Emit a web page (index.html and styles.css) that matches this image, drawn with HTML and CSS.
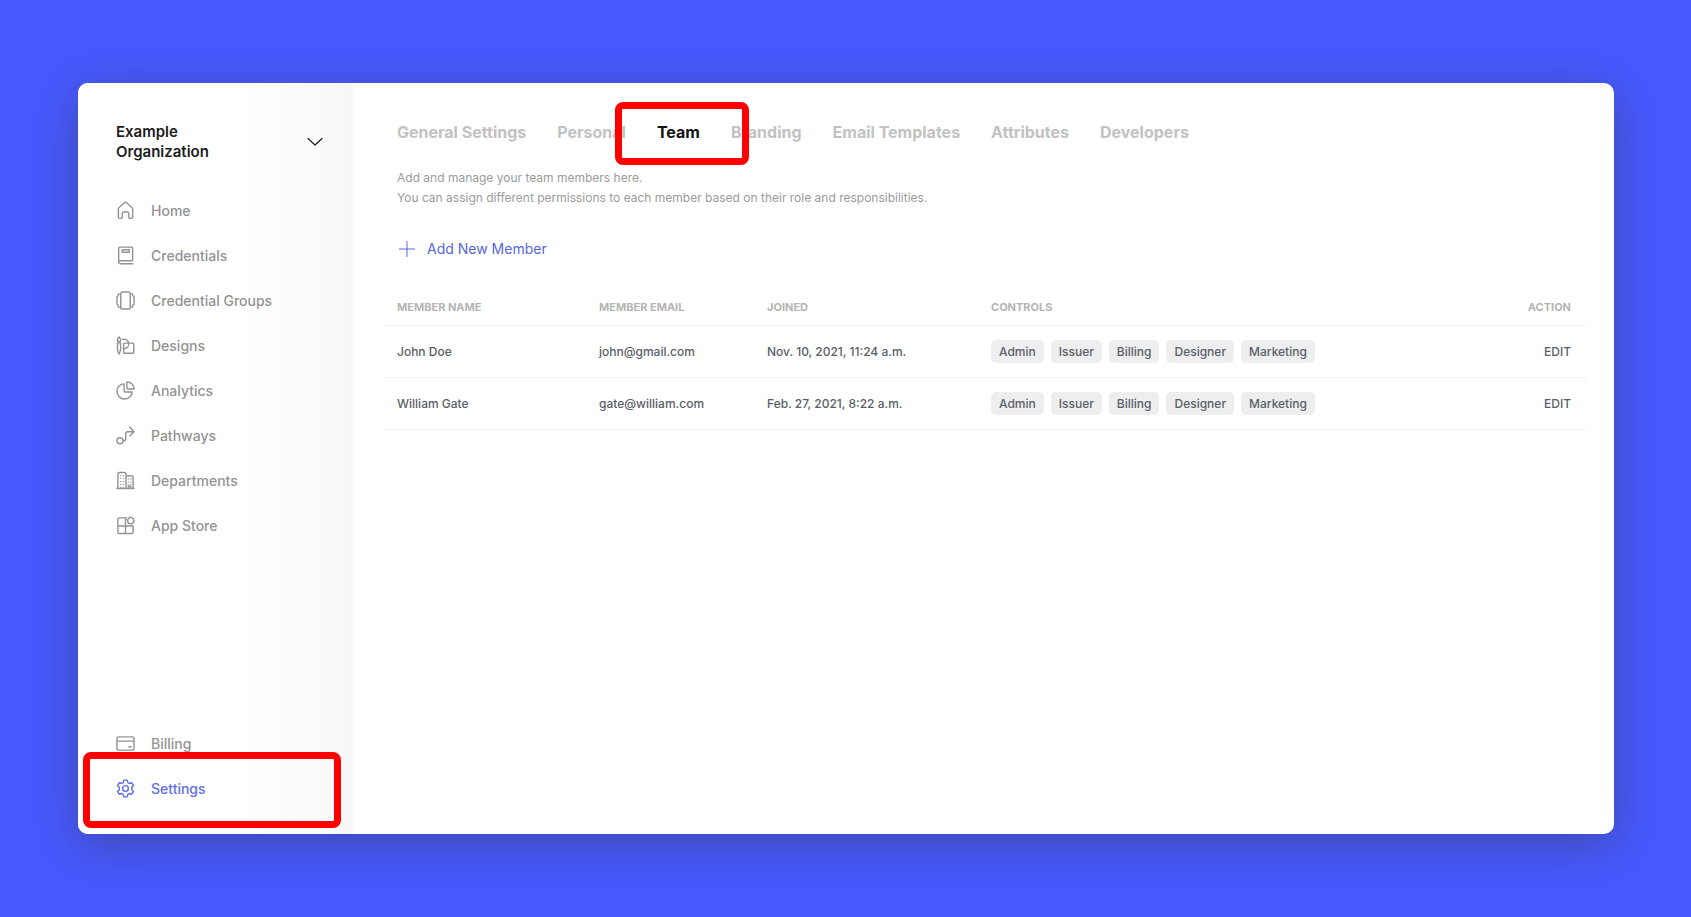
FILE: index.html
```html
<!DOCTYPE html>
<html lang="en">
<head>
	<meta charset="UTF-8">
	<title>Team</title>
	<link rel="stylesheet" href="styles.css">
</head>
<body>

	<div class="window">
		<aside class="sidebar">
			<button class="org" type="button">
				<span>Example<br>Organization</span>
				<svg class="chevron" viewBox="0 0 16 10"><path d="M1 1.5l7 6.5 7-6.5"/></svg>
			</button>
			<nav class="menu">
				<a href="#">
					<svg viewBox="0 0 20 20"><path d="M2.500 17V8.200c0-.6.2-1 .7-1.400L9 1.800c.6-.5 1.400-.5 2 0l5.800 5c.5.4.7.8.7 1.400V17c0 .8-.5 1.300-1.300 1.300h-1.400c-.8 0-1.300-.5-1.300-1.300v-4c0-.9-.6-1.500-1.500-1.500H8c-.9 0-1.500.6-1.500 1.500v4c0 .8-.5 1.300-1.300 1.300H3.800c-.8 0-1.300-.5-1.300-1.300z"/></svg>
					Home
				</a>
				<a href="#">
					<svg viewBox="0 0 20 20"><path d="M17.500 15.500V2.500c0-.8-.5-1.300-1.300-1.300H4.500c-1 0-1.700.7-1.700 1.700v14c0 1 .7 1.700 1.700 1.700h13M17.500 15.500h-13c-1 0-1.700.6-1.700 1.500M6.500 4h7.500v2.500H6.500z"/></svg>
					Credentials
				</a>
				<a href="#">
					<svg viewBox="0 0 20 20"><rect x="5" y="1" width="10" height="18" rx="2"/><path d="M5 3H3.500C2.700 3 2.300 3.500 2.300 4.200v.8C1.300 5.200 1 5.800 1 6.500v7c0 .8.4 1.400 1.300 1.500v.8c0 .8.5 1.200 1.200 1.200H5M15 3h1.500c.8 0 1.200.5 1.200 1.200v.8c1 .2 1.300.8 1.300 1.500v7c0 .8-.4 1.400-1.300 1.500v.8c0 .8-.5 1.200-1.200 1.200H15"/></svg>
					Credential Groups
				</a>
				<a href="#">
					<svg viewBox="0 0 20 20"><path d="M3.200 1c1 1.300 1.800 2.200 1.800 3.200S4.200 5.800 3.200 5.800 1.400 5.200 1.400 4.200 2.300 2.300 3.200 1zM1.500 7.200h3.400L4.700 9.500c.6 3 .4 6-1.500 9.500C1.300 15.500 1.100 12.500 1.700 9.500z"/><path d="M6.800 3.500a5 5 0 1 1 3 9.700H7.600M9.200 7.500h8.300c.7 0 1.200.5 1.200 1.200v8.300c0 .7-.5 1.200-1.200 1.200H9.200c-.8 0-1.200-.5-1.200-1.200V8.700c0-.7.4-1.200 1.200-1.200z"/></svg>
					Designs
				</a>
				<a href="#">
					<svg viewBox="0 0 20 20"><path d="M8.500 3C4.200 3 1 6.500 1 10.800S4.500 19 8.800 19s8.200-3.200 8.200-7.500H9.500c-.6 0-1-.4-1-1z"/><path d="M11.500 1c4.300 0 7.500 3.200 7.500 7.500h-6.500c-.6 0-1-.4-1-1z"/></svg>
					Analytics
				</a>
				<a href="#">
					<svg viewBox="0 0 20 20"><circle cx="4.200" cy="15.500" r="3.200"/><path d="M7.400 15.500h.8c1.200 0 2-.8 2-2V8c0-1.200.8-2 2-2H19M14.500 1.200L19 6l-4.500 4.500"/></svg>
					Pathways
				</a>
				<a href="#">
					<svg viewBox="0 0 20 20"><path d="M1 18.500h18M2 18.500V3c0-1 .6-1.500 1.500-1.500H9c1 0 1.500.6 1.500 1.500v15.500M10.500 5h6c1 0 1.500.5 1.500 1.500v12M13 18.500v-2.500h2.500v2.500"/><path class="dots" d="M5 4.500v13M7.700 4.500v13M13 8v7M15.500 8v7"/></svg>
					Departments
				</a>
				<a href="#">
					<svg viewBox="0 0 20 20"><path d="M11 2H3.500C2.700 2 2 2.700 2 3.500V17c0 .8.700 1.500 1.500 1.500h13c.8 0 1.500-.7 1.500-1.500v-6.500H2M10 2v16.500"/><path d="M14.500 1.200l3.400 1.100 1.100 3.400-2.500 2.800-3.500-.8-1-3.500z"/></svg>
					App Store
				</a>
			</nav>
			<nav class="menu menu-bottom">
				<a href="#">
					<svg viewBox="0 0 20 20"><rect x="1" y="3" width="18" height="14" rx="2"/><path d="M1 7.500h18M13.500 13.500h2.500"/></svg>
					Billing
				</a>
				<a href="#" class="active">
					<svg viewBox="0 0 20 20"><circle cx="10" cy="10" r="3"/><path d="M8.300 1.200h3.400l.7 2.500 1.700 1 2.500-.7 1.700 3-1.800 1.800v2.400l1.800 1.800-1.700 3-2.500-.7-1.700 1-.7 2.500H8.300l-.7-2.500-1.700-1-2.500.7-1.700-3 1.800-1.800V8.800L1.700 7l1.700-3 2.500.7 1.700-1z"/></svg>
					Settings
				</a>
			</nav>
		</aside>

		<main class="content">
			<nav class="tabs">
				<a href="#">General Settings</a>
				<a href="#">Personal</a>
				<a href="#" class="active">Team</a>
				<a href="#">Branding</a>
				<a href="#">Email Templates</a>
				<a href="#">Attributes</a>
				<a href="#">Developers</a>
			</nav>
			<p class="intro">
				Add and manage your team members here.<br>
				You can assign different permissions to each member based on their role and responsibilities.
			</p>
			<button class="add" type="button">
				<svg viewBox="0 0 16 16"><path d="M8 0v16M0 8h16"/></svg>
				Add New Member
			</button>
			<table class="members">
				<thead>
					<tr>
						<th class="col-name">Member Name</th>
						<th class="col-email">Member Email</th>
						<th class="col-joined">Joined</th>
						<th>Controls</th>
						<th class="col-action">Action</th>
					</tr>
				</thead>
				<tbody>
					<tr>
						<td>John Doe</td>
						<td>john@gmail.com</td>
						<td>Nov. 10, 2021, 11:24 a.m.</td>
						<td>
							<div class="tags">
								<span>Admin</span>
								<span>Issuer</span>
								<span>Billing</span>
								<span>Designer</span>
								<span>Marketing</span>
							</div>
						</td>
						<td class="col-action"><a href="#">EDIT</a></td>
					</tr>
					<tr>
						<td>William Gate</td>
						<td>gate@william.com</td>
						<td>Feb. 27, 2021, 8:22 a.m.</td>
						<td>
							<div class="tags">
								<span>Admin</span>
								<span>Issuer</span>
								<span>Billing</span>
								<span>Designer</span>
								<span>Marketing</span>
							</div>
						</td>
						<td class="col-action"><a href="#">EDIT</a></td>
					</tr>
				</tbody>
			</table>
		</main>
	</div>

</body>
</html>
```
FILE: styles.css
```css
* {
	margin: 0;
	padding: 0;
	box-sizing: border-box;
}
body {
	min-height: 100vh;
	padding: 83px 77px 83px 78px;
	display: flex;
	background: #475aff;
	font-family: Inter, "Liberation Sans", sans-serif;
	font-size: 12px;
	color: #5a5e68;
}
a {
	color: inherit;
	text-decoration: none;
}
button {
	border: 0;
	background: none;
	font: inherit;
	color: inherit;
	cursor: pointer;
}
svg {
	fill: none;
	stroke: currentColor;
	stroke-linecap: round;
	stroke-linejoin: round;
}
.window {
	flex: 1;
	display: flex;
	border-radius: 10px;
	background: #fff;
	box-shadow: 0 10px 48px rgba(50, 50, 70, .45);
}

/* sidebar */
.sidebar {
	flex: 0 0 275px;
	display: flex;
	flex-direction: column;
	padding: 39px 0 23px;
	border-radius: 10px 0 0 10px;
	background: linear-gradient(to right, #fff 60%, #f8f8f8);
}
.org {
	display: flex;
	align-items: center;
	justify-content: space-between;
	margin-bottom: 26px;
	padding: 0 30px 0 38px;
	font-size: 15px;
	font-weight: 600;
	line-height: 20px;
	text-align: left;
	color: #1c1c1c;
}
.chevron {
	width: 16px;
	height: 10px;
	stroke-width: 1.2;
}
.menu a {
	position: relative;
	display: flex;
	align-items: center;
	gap: 16px;
	height: 45px;
	padding-left: 38px;
	font-size: 14px;
	font-weight: 500;
	color: #939393;
}
.menu svg {
	width: 19px;
	height: 19px;
	stroke-width: 1.5;
}
.menu .dots {
	stroke-dasharray: 1 2;
	stroke-linecap: butt;
}
.menu-bottom {
	margin-top: auto;
}
.menu .active {
	color: #5f6ee6;
}

/* red marker frames */
.menu .active::after,
.tabs .active::after {
	content: "";
	position: absolute;
	border: 7px solid #f00;
	border-radius: 8px;
}
.menu .active::after {
	inset: -14px 12px -17px 5px;
}
.tabs .active::after {
	inset: -20px -49px -23px -42px;
}

/* content */
.content {
	flex: 1;
	min-width: 0;
	padding: 39px 28px 40px 31px;
}
.tabs {
	display: flex;
	gap: 31px;
	padding-left: 13px;
	font-size: 16px;
	font-weight: 700;
	line-height: 20px;
	color: #c2c2c2;
}
.tabs a {
	position: relative;
	white-space: nowrap;
}
.tabs .active {
	z-index: 1;
	color: #111;
}
.intro {
	margin-top: 26px;
	padding-left: 13px;
	font-size: 12px;
	line-height: 20px;
	color: #9b9b9b;
}
.add {
	display: flex;
	align-items: center;
	gap: 12px;
	margin: 31px 0 0 15px;
	font-size: 14px;
	line-height: 20px;
	color: #5566d8;
}
.add svg {
	width: 16px;
	height: 16px;
}
.members {
	width: 100%;
	margin-top: 31px;
	table-layout: fixed;
	border-collapse: collapse;
}
.members th,
.members td {
	padding: 0 0 0 13px;
	border-bottom: 1px solid #eff1f3;
	text-align: left;
	white-space: nowrap;
}
.members th {
	height: 35px;
	font-size: 11px;
	font-weight: 700;
	text-transform: uppercase;
	color: #b5b5b5;
}
.members td {
	height: 52px;
	font-weight: 500;
}
.members .col-name {
	width: 202px;
}
.members .col-email {
	width: 168px;
}
.members .col-joined {
	width: 224px;
}
.members .col-action {
	width: 120px;
	padding: 0 15px 0 0;
	text-align: right;
}
.tags {
	display: flex;
	gap: 7px;
}
.tags span {
	padding: 0 8px;
	border-radius: 5px;
	background: #eee;
	line-height: 23px;
}
```
